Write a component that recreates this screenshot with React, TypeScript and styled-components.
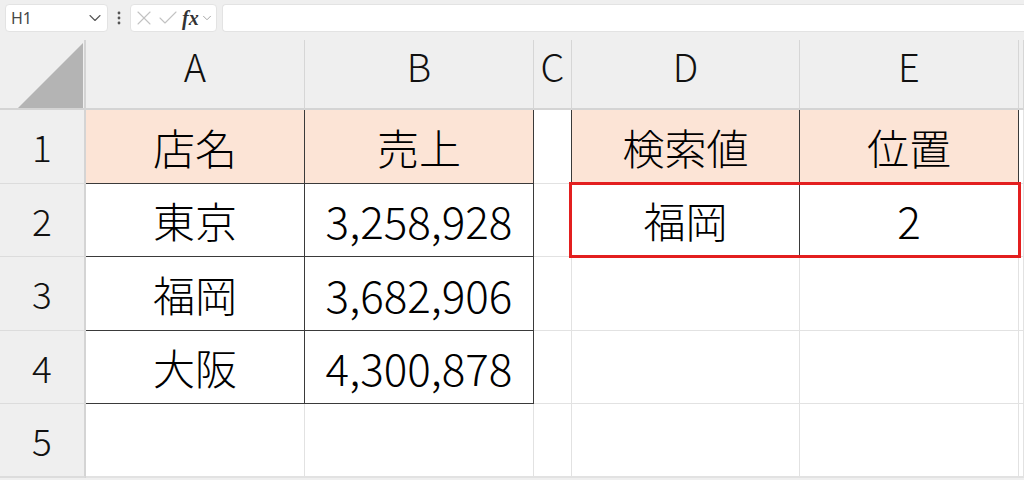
import React from "react";
import styled, { createGlobalStyle } from "styled-components";
import { ChevronDown, X, Check } from "lucide-react";

const GlobalStyle = createGlobalStyle`
  html, body { margin: 0; padding: 0; background: #efefef; }
  body { font-family: "Noto Sans CJK JP", "Noto Sans", sans-serif; }
  * { box-sizing: border-box; }
`;

const Page = styled.div`
  width: 1024px;
  height: 480px;
  overflow: hidden;
  display: flex;
  flex-direction: column;
  background: #efefef;
`;

const FormulaBar = styled.div`
  height: 40px;
  flex: none;
  display: flex;
  align-items: flex-start;
  padding: 4px 0 0 5px;
`;

const BarBox = styled.div`
  height: 28px;
  background: #ffffff;
  border: 1px solid #e3e3e3;
  border-radius: 4px;
  display: flex;
  align-items: center;
`;

const NameBox = styled(BarBox)`
  width: 103px;
  padding: 0 2px 0 5px;
  justify-content: space-between;
  font-family: "Noto Sans", sans-serif;
  font-size: 16px;
  color: #474747;
`;

const DotsSlot = styled.div`
  width: 22px;
  height: 28px;
  display: flex;
  align-items: center;
  justify-content: center;
`;

const FunctionBox = styled(BarBox)`
  width: 87px;
  padding: 0 0 0 1px;
  gap: 0;
`;

const FxLabel = styled.span`
  font-family: "Liberation Serif", "DejaVu Serif", serif;
  font-style: italic;
  font-weight: 700;
  font-size: 20px;
  color: #333333;
  margin-left: 2px;
  margin-right: 1px;
  line-height: 1;
`;

const FormulaInput = styled(BarBox)`
  flex: 1;
  margin-left: 5px;
  border-right: none;
  border-top-right-radius: 0;
  border-bottom-right-radius: 0;
`;

const Sheet = styled.div`
  flex: none;
  display: grid;
  grid-template-columns: 86px 219px 229px 38px 228px 219px 1fr;
  grid-template-rows: 70px 74px 73px 74px 73px 73px;
`;

type Place = { $row: number; $col: number | string };

const Corner = styled.div<Place>`
  grid-row: ${(p) => p.$row};
  grid-column: ${(p) => p.$col};
  background: #efefef;
  border-right: 2px solid #d4d4d4;
  border-bottom: 2px solid #d4d4d4;
  svg { display: block; }
`;

const ColHeader = styled.div<Place>`
  grid-row: ${(p) => p.$row};
  grid-column: ${(p) => p.$col};
  background: #efefef;
  border-right: 1px solid #d6d6d6;
  border-bottom: 2px solid #d4d4d4;
  display: flex;
  align-items: center;
  justify-content: center;
  padding-bottom: 17px;
  font-family: "Noto Sans CJK JP", "Noto Sans", sans-serif;
  font-weight: 300;
  font-size: 38px;
  color: #111111;
  line-height: 1;
`;

const RowHeader = styled.div<Place>`
  grid-row: ${(p) => p.$row};
  grid-column: ${(p) => p.$col};
  background: #efefef;
  border-right: 2px solid #d4d4d4;
  border-bottom: 1px solid #dcdcdc;
  display: flex;
  align-items: center;
  justify-content: center;
  font-family: "Noto Sans CJK JP", "Noto Sans", sans-serif;
  font-weight: 300;
  font-size: 37px;
  color: #111111;
  line-height: 1;
`;

const Cell = styled.div<
  Place & { $fill?: boolean; $darkRight?: boolean; $darkBottom?: boolean; $num?: boolean }
>`
  grid-row: ${(p) => p.$row};
  grid-column: ${(p) => p.$col};
  background: ${(p) => (p.$fill ? "#fce4d6" : "#ffffff")};
  border-right: 1px solid ${(p) => (p.$darkRight ? "#3a3a3a" : "#e2e2e2")};
  border-bottom: 1px solid ${(p) => (p.$darkBottom ? "#3a3a3a" : "#e2e2e2")};
  display: flex;
  align-items: center;
  justify-content: center;
  font-family: "Noto Sans CJK JP", "Noto Sans", sans-serif;
  font-weight: 300;
  font-size: ${(p) => (p.$num ? "44px" : "42px")};
  color: #000000;
  line-height: 1;
  white-space: nowrap;
`;

const HighlightBox = styled.div<Place>`
  grid-row: ${(p) => p.$row};
  grid-column: ${(p) => p.$col};
  margin: -2px -2px -1px -3px;
  border: 3px solid #e31f1f;
  pointer-events: none;
  z-index: 2;
`;

const columns = ["A", "B", "C", "D", "E", ""];

const data: string[][] = [
  ["店名", "売上", "", "検索値", "位置", ""],
  ["東京", "3,258,928", "", "福岡", "2", ""],
  ["福岡", "3,682,906", "", "", "", ""],
  ["大阪", "4,300,878", "", "", "", ""],
  ["", "", "", "", "", ""],
  ["", "", "", "", "", ""],
];

const isFill = (r: number, c: number) => r === 0 && (c === 0 || c === 1 || c === 3 || c === 4);
const isDarkRight = (r: number, c: number) =>
  (r <= 3 && (c === 0 || c === 1)) || (r === 0 && c === 2) || (r <= 1 && (c === 3 || c === 4));
const isDarkBottom = (r: number, c: number) =>
  (r <= 3 && (c === 0 || c === 1)) || (r === 0 && (c === 3 || c === 4));
const isNum = (v: string) => /^[0-9,]+$/.test(v);

export default function App() {
  return (
    <>
      <GlobalStyle />
      <Page>
        <FormulaBar>
          <NameBox>
            <span>H1</span>
            <ChevronDown size={20} color="#555" strokeWidth={1.3} />
          </NameBox>
          <DotsSlot>
            <svg width="4" height="14" viewBox="0 0 4 14">
              <circle cx="2" cy="2" r="1.4" fill="#555" />
              <circle cx="2" cy="7" r="1.4" fill="#555" />
              <circle cx="2" cy="12" r="1.4" fill="#555" />
            </svg>
          </DotsSlot>
          <FunctionBox>
            <X size={24} color="#c2c2c2" strokeWidth={1.1} />
            <Check size={24} color="#c2c2c2" strokeWidth={1.1} />
            <FxLabel>fx</FxLabel>
            <ChevronDown size={14} color="#999" strokeWidth={1.5} />
          </FunctionBox>
          <FormulaInput />
        </FormulaBar>
        <Sheet>
          <Corner $row={1} $col={1}>
            <svg width="84" height="68" viewBox="0 0 84 68">
              <polygon points="18,68 83,3 83,68" fill="#b4b4b4" />
            </svg>
          </Corner>
          {columns.map((c, i) => (
            <ColHeader key={`h${i}`} $row={1} $col={i + 2}>
              {c}
            </ColHeader>
          ))}
          {data.map((row, r) => (
            <React.Fragment key={`r${r}`}>
              <RowHeader $row={r + 2} $col={1}>
                {r < 5 ? r + 1 : ""}
              </RowHeader>
              {row.map((v, c) => (
                <Cell
                  key={`c${r}-${c}`}
                  $row={r + 2}
                  $col={c + 2}
                  $fill={isFill(r, c)}
                  $darkRight={isDarkRight(r, c)}
                  $darkBottom={isDarkBottom(r, c)}
                  $num={isNum(v)}
                >
                  {v}
                </Cell>
              ))}
            </React.Fragment>
          ))}
          <HighlightBox $row={3} $col="5 / 7" />
        </Sheet>
      </Page>
    </>
  );
}
